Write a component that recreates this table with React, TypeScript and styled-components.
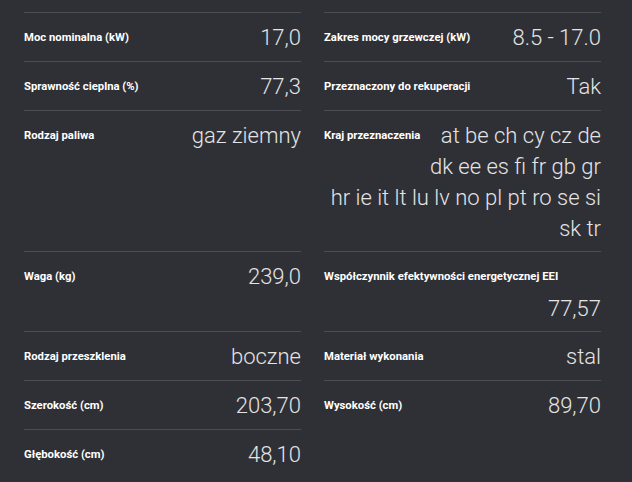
import React from 'react';
import styled, { createGlobalStyle } from 'styled-components';

const GlobalStyle = createGlobalStyle`
  html, body {
    margin: 0;
    padding: 0;
    background: #2f3035;
  }
  body {
    font-family: Roboto, "Noto Sans", "Liberation Sans", sans-serif;
    -webkit-font-smoothing: antialiased;
  }
`;

const Sheet = styled.dl`
  margin: 0;
  padding: 12px 0 0 24px;
  display: grid;
  grid-template-columns: 277px 277px;
  column-gap: 23px;
  background: #2f3035;
  min-height: 482px;
  box-sizing: border-box;
  align-content: start;
`;

const Item = styled.div`
  border-top: 1px solid #4c4d52;
  padding: 9px 0 7px;
`;

const Label = styled.dt`
  float: left;
  margin: 0 6px 1px 0;
  font-family: Roboto, "Noto Sans", sans-serif;
  font-weight: 700;
  font-size: 11.3px;
  line-height: 31px;
  color: #ffffff;
`;

const Value = styled.dd`
  margin: 0;
  text-align: right;
  font-family: Roboto, "Noto Sans", sans-serif;
  font-weight: 300;
  font-size: 22px;
  line-height: 31px;
  color: #e4e4e6;
`;

type Spec = { label: string; value: string };

const specs: Spec[] = [
  { label: 'Moc nominalna (kW)', value: '17,0' },
  { label: 'Zakres mocy grzewczej (kW)', value: '8.5 - 17.0' },
  { label: 'Sprawność cieplna (%)', value: '77,3' },
  { label: 'Przeznaczony do rekuperacji', value: 'Tak' },
  { label: 'Rodzaj paliwa', value: 'gaz ziemny' },
  {
    label: 'Kraj przeznaczenia',
    value: 'at be ch cy cz de dk ee es fi fr gb gr hr ie it lt lu lv no pl pt ro se si sk tr',
  },
  { label: 'Waga (kg)', value: '239,0' },
  { label: 'Współczynnik efektywności energetycznej EEI', value: '77,57' },
  { label: 'Rodzaj przeszklenia', value: 'boczne' },
  { label: 'Materiał wykonania', value: 'stal' },
  { label: 'Szerokość (cm)', value: '203,70' },
  { label: 'Wysokość (cm)', value: '89,70' },
  { label: 'Głębokość (cm)', value: '48,10' },
];

export default function App() {
  return (
    <>
      <GlobalStyle />
      <Sheet>
        {specs.map((s) => (
          <Item key={s.label}>
            <Label>{s.label}</Label>
            <Value>{s.value}</Value>
          </Item>
        ))}
      </Sheet>
    </>
  );
}
